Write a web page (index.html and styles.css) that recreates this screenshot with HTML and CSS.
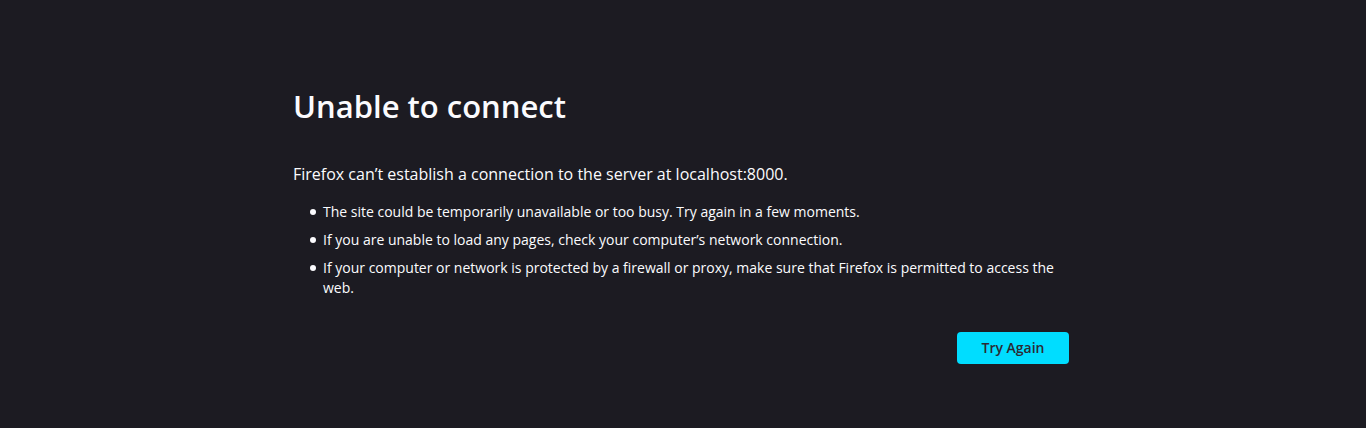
FILE: index.html
```html
<!DOCTYPE html>
<html lang="en">
<head>
<meta charset="utf-8">
<meta name="viewport" content="width=device-width, initial-scale=1">
<title>Problem loading page</title>
<link rel="stylesheet" href="styles.css">
</head>
<body>
<main class="container">
<h1 class="title">Unable to connect</h1>
<p class="description">Firefox can’t establish a connection to the server at localhost:8000.</p>
<ul class="hints">
<li>The site could be temporarily unavailable or too busy. Try again in a few moments.</li>
<li>If you are unable to load any pages, check your computer’s network connection.</li>
<li>If your computer or network is protected by a firewall or proxy, make sure that Firefox is permitted to access the web.</li>
</ul>
<div class="actions"><button class="primary" type="button">Try Again</button></div>
</main>
</body>
</html>
```
FILE: styles.css
```css
* { box-sizing: border-box; }
body {
  margin: 0;
  min-height: 100vh;
  display: flex;
  align-items: center;
  justify-content: center;
  padding-top: 22px;
  background: #1c1b22;
  color: #fbfbfe;
  font: 14px/20px "Open Sans", "Noto Sans", sans-serif;
}
.container {
  width: 100%;
  max-width: 780px;
}
.title {
  margin: 0 0 36px;
  font-size: 31px;
  line-height: 40px;
  font-weight: 600;
}
.description {
  margin: 0 0 16px;
  font-size: 16px;
  line-height: 24px;
}
.hints {
  display: grid;
  gap: 8px;
  margin: 0;
  padding: 0 0 0 17px;
  list-style: none;
}
.hints li {
  display: flex;
  gap: 7px;
}
.hints li::before {
  content: "";
  flex: none;
  width: 6px;
  height: 6px;
  margin-top: 7px;
  border-radius: 50%;
  background: currentColor;
}
.actions {
  display: flex;
  justify-content: flex-end;
  padding-right: 4px;
  margin-top: 34px;
}
.primary {
  min-width: 112px;
  height: 32px;
  padding: 0 16px;
  border: 0;
  border-radius: 4px;
  background: #00ddff;
  color: #2b2a33;
  font: inherit;
  font-weight: 600;
}
```
